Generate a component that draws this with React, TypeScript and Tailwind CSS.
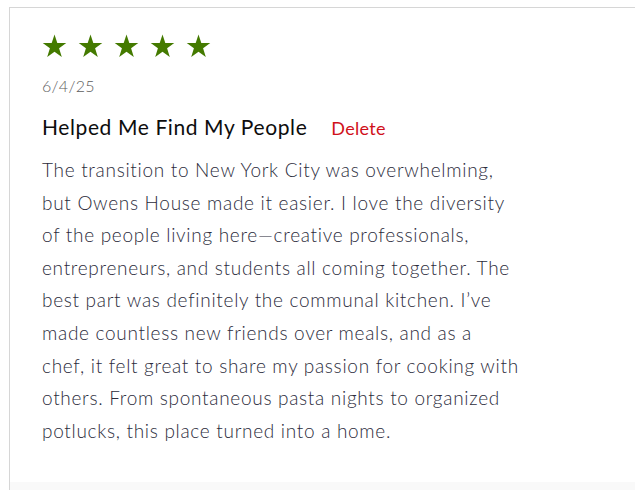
import React from "react";

const lines = [
  "The transition to New York City was overwhelming,",
  "but Owens House made it easier. I love the diversity",
  "of the people living here\u2014creative professionals,",
  "entrepreneurs, and students all coming together. The",
  "best part was definitely the communal kitchen. I\u2019ve",
  "made countless new friends over meals, and as a",
  "chef, it felt great to share my passion for cooking with",
  "others. From spontaneous pasta nights to organized",
  "potlucks, this place turned into a home.",
];

function Star() {
  return (
    <svg width="25" height="24" viewBox="0 0 24 23" className="block">
      <path
        d="M12 0.5 L14.7 8.6 L23.3 8.6 L16.4 13.7 L19 22 L12 16.9 L5 22 L7.6 13.7 L0.7 8.6 L9.3 8.6 Z"
        fill="#447a00"
      />
    </svg>
  );
}

export default function App() {
  return (
    <div className="h-[490px] w-[635px] overflow-hidden bg-white pt-[7px] pl-[9px] font-['Lato','Noto_Sans',sans-serif]">
      <div className="flex h-full flex-col border-l border-t border-[#d6d6d6]">
        <div className="px-[32px] pt-[26px] h-[474px]">
          <div className="flex gap-[11px]">
            <Star />
            <Star />
            <Star />
            <Star />
            <Star />
          </div>
          <div className="mt-[18px] text-[16px] leading-[20px] tracking-[0.3px] font-light text-[#5c5c5c]">6/4/25</div>
          <div className="mt-[18px] flex items-baseline">
            <span className="text-[21px] leading-[26px] tracking-[0.6px] text-[#0d0d0d]">Helped Me Find My People</span>
            <span className="ml-[24px] text-[18px] leading-[22px] tracking-[0.3px] text-[#d0101a]">Delete</span>
          </div>
          <div className="mt-[14px] text-[19px] leading-[32.6px] tracking-[0.7px] font-light text-[#2c2c3c]">
            {lines.map((l, i) => (
              <div key={i} className="whitespace-nowrap">{l}</div>
            ))}
          </div>
        </div>
        <div className="flex-1 bg-[#f9f9f9]" />
      </div>
    </div>
  );
}
